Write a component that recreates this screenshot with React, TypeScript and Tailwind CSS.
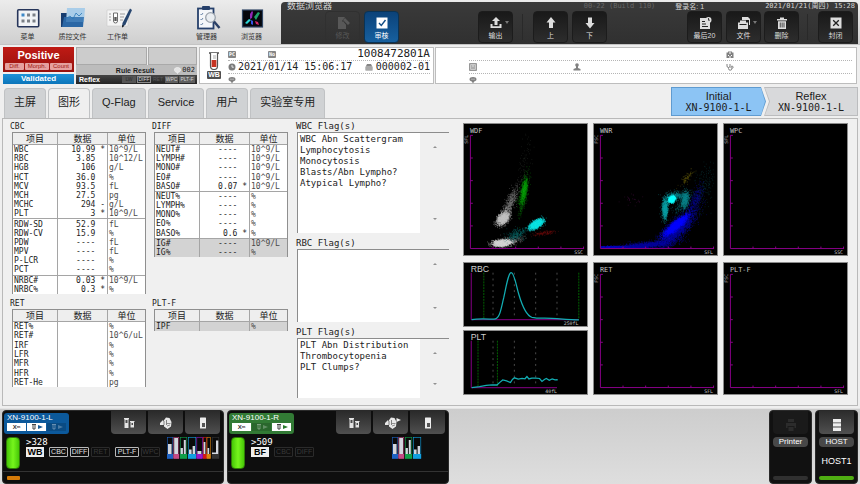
import { ReactNode } from "react";
import clsx from "clsx";

const MONO = "font-['DejaVu_Sans_Mono','Noto_Sans_CJK_SC',monospace]";
const SANS = "font-['Liberation_Sans','Noto_Sans_CJK_SC',sans-serif]";

type Row = [name: string, value: string, flag: string, unit: string];

interface Group {
  rows: Row[];
  research?: boolean;
}

const CBC: Group[] = [
  {
    rows: [
      ["WBC", "10.99", "*", "10^9/L"],
      ["RBC", "3.85", "", "10^12/L"],
      ["HGB", "106", "", "g/L"],
      ["HCT", "36.0", "", "%"],
      ["MCV", "93.5", "", "fL"],
      ["MCH", "27.5", "", "pg"],
      ["MCHC", "294", "-", "g/L"],
      ["PLT", "3", "*", "10^9/L"],
    ],
  },
  {
    rows: [
      ["RDW-SD", "52.9", "", "fL"],
      ["RDW-CV", "15.9", "", "%"],
      ["PDW", "----", "", "fL"],
      ["MPV", "----", "", "fL"],
      ["P-LCR", "----", "", "%"],
      ["PCT", "----", "", "%"],
    ],
  },
  {
    rows: [
      ["NRBC#", "0.03", "*", "10^9/L"],
      ["NRBC%", "0.3", "*", "%"],
    ],
  },
];

const DIFF: Group[] = [
  {
    rows: [
      ["NEUT#", "----", "", "10^9/L"],
      ["LYMPH#", "----", "", "10^9/L"],
      ["MONO#", "----", "", "10^9/L"],
      ["EO#", "----", "", "10^9/L"],
      ["BASO#", "0.07", "*", "10^9/L"],
    ],
  },
  {
    rows: [
      ["NEUT%", "----", "", "%"],
      ["LYMPH%", "----", "", "%"],
      ["MONO%", "----", "", "%"],
      ["EO%", "----", "", "%"],
      ["BASO%", "0.6", "*", "%"],
    ],
  },
  {
    research: true,
    rows: [
      ["IG#", "----", "", "10^9/L"],
      ["IG%", "----", "", "%"],
    ],
  },
];

const RET: Group[] = [
  {
    rows: [
      ["RET%", "", "", "%"],
      ["RET#", "", "", "10^6/uL"],
      ["IRF", "", "", "%"],
      ["LFR", "", "", "%"],
      ["MFR", "", "", "%"],
      ["HFR", "", "", "%"],
      ["RET-He", "", "", "pg"],
    ],
  },
];

const PLTF: Group[] = [{ research: true, rows: [["IPF", "", "", "%"]] }];

interface Cluster {
  x: number;
  y: number;
  long: number;
  short: number;
  angle: number;
  count: number;
  color: string;
}

const WDF_CLUSTERS: Cluster[] = [
  { x: 61, y: 40, long: 16, short: 3, angle: -83, count: 90, color: "#2c332c" },
  { x: 46, y: 82, long: 10, short: 2.2, angle: -68, count: 650, color: "#7c7c7c" },
  { x: 39.5, y: 96, long: 3.6, short: 2.4, angle: -45, count: 1300, color: "#c4c4c4" },
  { x: 48, y: 118, long: 6, short: 2, angle: -10, count: 250, color: "#777777" },
  { x: 38.5, y: 121, long: 4.6, short: 1.6, angle: -4, count: 1700, color: "#d6d6d6" },
  { x: 60.5, y: 70, long: 8.5, short: 1.8, angle: -80, count: 900, color: "#087a08" },
  { x: 61, y: 67, long: 5, short: 1.2, angle: -80, count: 300, color: "#0da00d" },
  { x: 53, y: 112, long: 5, short: 3, angle: -20, count: 330, color: "#0b6060" },
  { x: 73, y: 102, long: 3.8, short: 1.7, angle: -32, count: 1600, color: "#0fe5e5" },
  { x: 81, y: 111, long: 6, short: 1, angle: -8, count: 150, color: "#701010" },
];

const WNR_CLUSTERS: Cluster[] = [
  { x: 40, y: 76, long: 5, short: 3, angle: 0, count: 26, color: "#50104a" },
  { x: 112, y: 64, long: 14, short: 5, angle: -75, count: 190, color: "#0b4046" },
  { x: 94, y: 55, long: 5, short: 1.6, angle: -50, count: 90, color: "#6c6510" },
  { x: 102, y: 79, long: 9, short: 2.6, angle: -68, count: 450, color: "#0a0a8c" },
  { x: 24, y: 125, long: 16, short: 0.5, angle: 0, count: 900, color: "#0808c8" },
  { x: 52, y: 123, long: 14, short: 1.5, angle: -6, count: 1500, color: "#0707a0" },
  { x: 83, y: 108, long: 12, short: 4, angle: -45, count: 3600, color: "#0808a4" },
  { x: 83, y: 103, long: 7, short: 1.8, angle: -40, count: 2400, color: "#0505ff" },
  { x: 83, y: 73, long: 6, short: 2, angle: -5, count: 450, color: "#0d8088" },
  { x: 87, y: 85, long: 4, short: 2.5, angle: -40, count: 130, color: "#0a5a60" },
  { x: 92.5, y: 77, long: 4.2, short: 1.9, angle: -85, count: 650, color: "#0f858c" },
  { x: 72, y: 86, long: 5, short: 1.4, angle: -88, count: 850, color: "#0fa0a5" },
  { x: 79, y: 76.5, long: 1.8, short: 1.4, angle: -50, count: 900, color: "#12ffff" },
];

// Deterministic gaussian cloud, so that the plot does not change between renders.
function cloudPath(cluster: Cluster, seed: number) {
  let state = seed * 7919 + 17;
  const next = () => {
    state = (state * 1664525 + 1013904223) % 4294967296;
    return (state + 1) / 4294967297;
  };
  const rad = (cluster.angle * Math.PI) / 180;
  let d = "";
  for (let i = 0; i < cluster.count; i++) {
    const r = Math.sqrt(-2 * Math.log(next()));
    const t = 2 * Math.PI * next();
    const u = r * Math.cos(t) * cluster.long;
    const v = r * Math.sin(t) * cluster.short;
    const x = cluster.x + u * Math.cos(rad) - v * Math.sin(rad);
    const y = cluster.y + u * Math.sin(rad) + v * Math.cos(rad);
    if (x < 7 || x > 122 || y < 10 || y > 126) continue;
    d += `M${x.toFixed(1)} ${y.toFixed(1)}h.6`;
  }
  return d;
}

const TICKS = [0, 23, 46, 69, 92];

interface ScatterProps {
  title: string;
  xAxis: string;
  yAxis: string;
  clusters?: Cluster[];
}

function Scattergram({ title, xAxis, yAxis, clusters = [] }: ScatterProps) {
  return (
    <svg viewBox="0 0 125 133" className="h-[133px] w-full border border-[#8a8a8a] bg-black" role="img" aria-label={title}>
      {clusters.map((cluster, index) => (
        <path key={index} d={cloudPath(cluster, index + 1)} stroke={cluster.color} strokeWidth="0.6" />
      ))}
      <g stroke="#8a008a" strokeWidth="1" fill="none">
        <path d="M6.5 11.5V126.5H122" />
        {TICKS.map((t) => (
          <path key={t} d={`M6.5 ${t + 11.5}h2.5M${t + 29.5} 126.5v-2`} />
        ))}
      </g>
      <text x="6" y="9" fill="#c0c0c0" className={clsx(MONO, "text-[7px]")}>{title}</text>
      <text x="121" y="132" textAnchor="end" fill="#c0c0c0" className={clsx(MONO, "text-[5px]")}>{xAxis}</text>
      <text transform="translate(4 20) rotate(-90)" fill="#a0a0a0" className={clsx(MONO, "text-[5px]")}>{yAxis}</text>
    </svg>
  );
}

interface HistogramProps {
  title: string;
  scale: string;
  end: number;
  curve: string;
  limits: number[];
  grid: number[];
}

function Histogram({ title, scale, end, curve, limits, grid }: HistogramProps) {
  return (
    <svg viewBox="0 0 125 65" className="h-[65px] w-full border border-[#8a8a8a] bg-black" role="img" aria-label={title}>
      {grid.map((x) => (
        <path key={x} d={`M${x} 10V58`} stroke="#4c4c4c" strokeDasharray="2 4" />
      ))}
      {limits.map((x) => (
        <path key={x} d={`M${x} 10V58`} stroke="#006400" strokeDasharray="2 1" />
      ))}
      <path d={`M6.5 10V58.5H${end}`} stroke="#8a008a" fill="none" />
      <path d={curve} stroke="#12adb3" strokeWidth="1.3" fill="none" />
      <text x="6" y="9" fill="#cccccc" className={clsx(SANS, "text-[9px]")}>{title}</text>
      <text x={end} y="64" textAnchor="end" fill="#c0c0c0" className={clsx(MONO, "text-[5px]")}>{scale}</text>
    </svg>
  );
}

function ResultTable({ title, groups, height }: { title: string; groups: Group[]; height: string }) {
  return (
    <section>
      <h2 className="h-[11px] text-[8px] leading-[11px]">{title}</h2>
      <table className={clsx("ml-[2px] w-[134px] table-fixed border-separate border-spacing-0 border-x border-t border-[#8f8f8f] text-[8px] leading-[9px]", height)}>
        <colgroup>
          <col className="w-[45px]" />
          <col className="w-[50px]" />
          <col />
        </colgroup>
        <thead>
          <tr className="h-[12px] bg-[#eeeeee] text-[9px] leading-[10px]">
            {["项目", "数据", "单位"].map((head) => (
              <th key={head} className="border-b border-r border-[#a5a5a5] p-0 font-normal last:border-r-0">
                {head}
              </th>
            ))}
          </tr>
        </thead>
        {groups.map((group, index) => (
          <tbody key={index} className={group.research ? "bg-[#d3d3d3]" : "bg-white"}>
            {group.rows.map(([name, value, flag, unit], rowIndex) => {
              const line = index > 0 && rowIndex === 0 && "border-t";
              return (
                <tr key={name}>
                  <td className={clsx("border-r border-[#a5a5a5] p-0 pl-[1px]", line)}>{name}</td>
                  <td className={clsx("whitespace-pre border-r border-[#a5a5a5] p-0 pr-[2px] text-right", line)}>
                    {value && `${value} ${flag || " "}`}
                  </td>
                  <td className={clsx("border-[#a5a5a5] p-0 pl-[1px] text-[#4a4a4a]", line)}>{unit}</td>
                </tr>
              );
            })}
          </tbody>
        ))}
      </table>
    </section>
  );
}

function FlagBox({ title, flags, height }: { title: string; flags: string[]; height: string }) {
  return (
    <section>
      <h2 className="h-[11px] text-[9px] leading-[11px]">{title}</h2>
      <div className={clsx("ml-[1px] flex border-l border-t border-[#8c8c8c]", height)}>
        <ul className="flex-1 bg-white pl-[2px] pt-px text-[9px] leading-[11px]">
          {flags.map((flag) => (
            <li key={flag}>{flag}</li>
          ))}
        </ul>
        <div className="flex w-[29px] flex-col items-center justify-between py-[13px]">
          <button type="button" aria-label={`${title} up`} className="leading-none">
            <svg viewBox="0 0 4 2" className="h-[2px] w-[4px]"><path d="M0 2 2 0l2 2z" fill="#909090" /></svg>
          </button>
          <button type="button" aria-label={`${title} down`} className="leading-none">
            <svg viewBox="0 0 4 2" className="h-[2px] w-[4px]"><path d="M0 0l2 2 2-2z" fill="#909090" /></svg>
          </button>
        </div>
      </div>
    </section>
  );
}

function LauncherButton({ label, children }: { label: string; children: ReactNode }) {
  return (
    <button type="button" className="flex w-[45px] flex-col items-center text-[7px] leading-[10px] text-[#333333]">
      <svg viewBox="0 0 28 26" className="mb-[1px] h-[26px] w-[28px]">{children}</svg>
      {label}
    </button>
  );
}

interface ToolButtonProps {
  label: string;
  variant?: "normal" | "active" | "disabled";
  arrow?: boolean;
  className?: string;
  children: ReactNode;
}

function ToolButton({ label, variant = "normal", arrow, className, children }: ToolButtonProps) {
  return (
    <button
      type="button"
      disabled={variant === "disabled"}
      className={clsx(
        "relative flex h-[32px] w-[35px] shrink-0 flex-col items-center rounded-[4px] border pt-[4px] text-[7px] leading-[10px]",
        variant === "normal" && "border-[#1c1c1c] bg-linear-to-b from-[#191919] to-[#2d2d2d] text-[#dddddd]",
        variant === "active" && "border-[#0a3355] bg-linear-to-b from-[#0b4279] to-[#17609f] text-white",
        variant === "disabled" && "border-[#303030] text-[#585858]",
        className,
      )}
    >
      <svg viewBox="0 0 14 14" className="mb-[1px] size-[14px]" fill="currentColor">{children}</svg>
      {label}
      {arrow ? (
        <svg viewBox="0 0 4 3" className="absolute right-[3px] top-[9px] h-[3px] w-[4px]"><path d="M0 0h4L2 3z" fill="#777777" /></svg>
      ) : null}
    </button>
  );
}

function Divider({ className }: { className: string }) {
  return <span className={clsx("h-[26px] w-px shrink-0 bg-[#292929]", className)} />;
}

function Header() {
  return (
    <header className="flex h-[45px] border-b border-[#c4c4c4] bg-linear-to-b from-[#ececec] to-[#cfcfcf]">
      <div className="flex w-[281px] shrink-0 pl-[5px] pt-[5px]">
        <LauncherButton label="菜单">
          <rect x="3.700" y="4.700" width="21" height="17" rx="1" fill="#f1f3f6" stroke="#26355a" strokeWidth="1.6" />
          <rect x="7.500" y="8.500" width="3" height="3" fill="#3c88c8" />
          {[13, 18.5].map((x) => <rect key={x} x={x} y="8.500" width="3" height="3" fill="#7b8087" />)}
          {[7.5, 13, 18.5].map((x) => <rect key={x} x={x} y="14.500" width="3" height="3" fill="#7b8087" />)}
        </LauncherButton>
        <LauncherButton label="质控文件">
          <path d="M2 8h7l2-2h13v16H2z" fill="#173d70" />
          <path d="M8 3h18l-1 14H7z" fill="#a9cde9" />
          <path d="M5 12h20l-1 10H3z" fill="#2f6fae" opacity=".85" />
          <path d="M8 13l3-2 3 3 3-6 3 3 3-3" fill="none" stroke="#2b78b8" strokeWidth=".8" />
        </LauncherButton>
        <LauncherButton label="工作单">
          <path d="M3 5h21v16H3z" fill="#f4f4f4" stroke="#c2c2c2" strokeWidth=".5" />
          <path d="M5 9h2m-2 3h2m-2 3h2m9-6h5m-5 3h4m-4 3h3" stroke="#9c9c9c" strokeWidth="1" />
          <path d="M9.500 8h4v8a2 2 0 0 1-4 0z" fill="#ffffff" stroke="#5e5e5e" strokeWidth=".9" />
          <path d="M10.300 12h2.400v4h-2.400z" fill="#565656" />
          <path d="M28 5l-2-1.500L18.500 18l-.5 4.500 3.500-3z" fill="#28466f" />
          <path d="M18 22.500l.4-2.500 1.800 1z" fill="#111111" />
        </LauncherButton>
        <span className="w-[44px]" />
        <LauncherButton label="管理器">
          <rect x="5" y="3.500" width="15.500" height="20" fill="#f4f6f9" stroke="#26406b" strokeWidth="1.800" />
          <rect x="9" y="1" width="8" height="4" rx="1" fill="#26406b" />
          <path d="M7.500 9l1 1 1.500-2m-2.500 6 1 1 1.500-2m-2.500 6 1 1 1.500-2" fill="none" stroke="#5e7ba0" strokeWidth=".9" />
          <circle cx="17.500" cy="12.500" r="4.800" fill="#e9edf1" stroke="#9aa2ab" strokeWidth="1.300" />
          <path d="M21 16.500l5.500 6.500" stroke="#2b4066" strokeWidth="2.400" />
        </LauncherButton>
        <LauncherButton label="浏览器">
          <rect x="4.500" y="5" width="20" height="17" fill="#05070d" stroke="#314766" strokeWidth="1.200" />
          <path d="M12 9l2-3 1 1-1 6-2 1z" fill="#9127b7" />
          <path d="M16 12l4-5 2 1-4 7z" fill="#1fa56a" />
          <path d="M7 18l4-4 2 1-4 4z" fill="#2dd6d6" />
          <path d="M17 16l3 1 1 3-3-1z" fill="#d22a6a" />
          <path d="M13 15l2 1v4l-2-1z" fill="#3654e6" />
        </LauncherButton>
      </div>
      <div className="mr-[2px] mt-[2px] flex-1 rounded-t-[4px] bg-linear-to-b from-[#3a3a3a] to-[#303030]">
        <div className="flex h-[9px] items-center pl-[6px] pr-[3px] text-[7px] leading-[9px] text-[#d6d6d6]">
          <h1 className="flex-1 text-[9px]">数据浏览器</h1>
          <span className={clsx(MONO, "mr-[20px] text-[#666666]")}>00-22 (Build 110)</span>
          <span className="mr-[61px]">登录名: 1</span>
          <time className={MONO}>2021/01/21(周四) 15:28</time>
        </div>
        <nav className="flex items-center pr-[5px]">
          <ToolButton label="修改" variant="disabled" className="ml-[44px]">
            <path d="M2 1h7l-3 4 4 4v4H2z" />
            <path d="M9 2l5 5-2 2-5-5zM7 5l3 4H7z" />
          </ToolButton>
          <ToolButton label="审核" variant="active" className="ml-[4px]">
            <rect x="1.500" y="1.500" width="11" height="11" />
            <path d="M4 7l2.300 2.500L10.500 4" fill="none" stroke="#124d85" strokeWidth="1.400" />
          </ToolButton>
          <ToolButton label="输出" arrow className="ml-[79px]">
            <path d="M7 1l4 4H8.500v4h-3V5H3z" />
            <path d="M1.500 8v4h11V8h-2v2.200h-7V8z" />
          </ToolButton>
          <Divider className="ml-[9px]" />
          <ToolButton label="上" className="ml-[10px]">
            <path d="M7 1l4.500 5.500H9V12H5V6.500H2.500z" />
          </ToolButton>
          <ToolButton label="下" className="ml-[4px]">
            <path d="M7 12.500L2.500 7H5V1.500h4V7h2.500z" />
          </ToolButton>
          <span className="flex-1" />
          <ToolButton label="最后20">
            <path fillRule="evenodd" d="M2 2h6v4h4v7H2zM4 5v1h3V5zm0 2.500v1h4v-1zM4 10v1h6v-1z" />
            <path fillRule="evenodd" d="M10.500 1a3 3 0 1 1 0 6 3 3 0 0 1 0-6zm-.5 1v2.500h2V3.700h-1.200V2z" />
          </ToolButton>
          <ToolButton label="文件" arrow className="ml-[4px]">
            <path d="M5 1h6l2 2v6h-1V4H5z" />
            <path d="M3 4.500h6v2h2V13H1V6.500h2z" />
            <path d="M2.500 8.500h7" stroke="#222222" />
          </ToolButton>
          <ToolButton label="删除" className="ml-[3px]">
            <path fillRule="evenodd" d="M5 1.500h4V3h3v1.500H2V3h3zM3 5.200h8V13H3zM4.800 6.500v5h.8v-5zm1.900 0v5h.8v-5zm1.900 0v5h.8v-5z" />
          </ToolButton>
          <Divider className="ml-[8px]" />
          <ToolButton label="封闭" className="ml-[10px]">
            <rect x="1.500" y="1.500" width="11" height="11" />
            <path d="M4.200 4.200l5.600 5.600m0-5.600L4.200 9.800" stroke="#202020" strokeWidth="1.300" />
          </ToolButton>
        </nav>
      </div>
    </header>
  );
}

function Balloon() {
  return (
    <svg viewBox="0 0 8 8" className="size-[8px]"><path d="M4 1c2 0 3.500.8 3.500 2.200S6.300 5.300 5.200 5.400L4 7.500 2.800 5.400C1.700 5.300.5 4.600.5 3.200S2 1 4 1z" fill="#808080" /><path d="M2 3.200h4" stroke="#c8c8c8" strokeWidth=".7" /></svg>
  );
}

function KeyBadge({ children }: { children: ReactNode }) {
  return <span className="block rounded-[1px] bg-[#858585] px-[1px] text-[5px] font-bold leading-[7px] text-white">{children}</span>;
}

function SampleBar() {
  return (
    <div className="flex h-[40px] items-stretch px-[3px] pb-[1px] pt-[2px]">
      <div className="flex w-[71px] flex-col gap-[2px] text-center font-bold text-white">
        <div className="h-[25px] bg-linear-to-b from-[#c01a14] to-[#96120e]">
          <p className="text-[11px] leading-[16px]">Positive</p>
          <ul className="flex gap-[1px] px-[2px] text-[6px] font-normal leading-[7px] text-[#a01510]">
            <li className="w-[19px] rounded-[1px] bg-[#e5a19f]">Diff.</li>
            <li className="flex-1 rounded-[1px] bg-[#e5a19f]">Morph.</li>
            <li className="w-[22px] rounded-[1px] bg-[#e5a19f]">Count</li>
          </ul>
        </div>
        <p className="flex-1 bg-linear-to-b from-[#1c92d8] to-[#0c75ba] text-[8px] leading-[10px]">Validated</p>
      </div>
      <div className="ml-[2px] flex w-[121px] flex-col bg-[#bcbcbc]">
        <div className="flex h-[18px] gap-[1px] bg-[#efefef]">
          <span className="w-[71px] border border-[#a9a9a9] bg-[#cccccc]" />
          <span className="flex-1 border border-[#a9a9a9] bg-[#cccccc]" />
        </div>
        <div className="flex h-[10px] items-center justify-end pr-[2px] text-[7px] leading-[9px]">
          <b className="mr-[20px]">Rule Result</b>
          <svg viewBox="0 0 8 8" className="mr-[1px] size-[7px]"><path d="M4 .5c2 0 3.500 1 3.500 2.700S6 6 5 6L4 7.500 3 6C2 6 .5 5 .5 3.200S2 .5 4 .5z" fill="#e4e4e4" stroke="#ffffff" strokeWidth=".6" /></svg>
          <span className={MONO}>002</span>
        </div>
        <div className="flex h-[9px] items-center gap-[1px] bg-linear-to-b from-[#454545] to-[#242424] px-[2px] text-[5px] leading-[7px] text-[#d5d5d5]">
          <b className="flex-1 pl-px text-[7px] text-white">Reflex</b>
          <span className="w-[14px] bg-[#555555] text-center text-[#2c2c2c]">LW</span>
          <span className="w-[14px] border border-[#8c8c8c] text-center leading-[5px]">DIFF</span>
          <span className="w-[12px] text-center text-[#5a5a5a]">RET</span>
          <span className="w-[13px] bg-[#606060] text-center">WPC</span>
          <span className="w-[16px] bg-[#606060] text-center">PLT-F</span>
        </div>
      </div>
      <div className="ml-[2px] flex w-[235px] border border-[#bdbdbd] bg-white pr-[3px]">
        <div className="flex w-[28px] flex-col items-center pt-[4px]">
          <svg viewBox="0 0 12 18" className="h-[18px] w-[12px]">
            <path d="M1 1h10" stroke="#555555" strokeWidth="1.600" />
            <path d="M2.500 1v13a3.500 3.500 0 0 0 7 0V1" fill="#ffffff" stroke="#555555" strokeWidth="1.200" />
            <path d="M3.600 8h4.800v7H3.600z" fill="#c63322" />
            <path d="M5 4h3M5 6h3" stroke="#888888" strokeWidth=".7" />
          </svg>
          <span className="mt-px rounded-[1px] bg-[#4e4e4e] px-px text-[7px] font-bold leading-[8px] text-white">WB</span>
        </div>
        <div className={clsx(MONO, "flex-1 text-[10px] text-[#222222]")}>
          <div className="flex h-[13px] items-center border-b border-dotted border-[#b5b5b5] text-[11px]">
            <KeyBadge>PC</KeyBadge>
            <span className="ml-[32px]"><KeyBadge>No</KeyBadge></span>
            <span className="flex-1 text-right leading-[12px]">1008472801A</span>
          </div>
          <div className="flex h-[13px] items-center border-b border-dotted border-[#b5b5b5] leading-[12px]">
            <svg viewBox="0 0 8 8" className="size-[8px]"><circle cx="4" cy="4" r="3.500" fill="#7b7b7b" /><path d="M4 2v2.200h1.800" fill="none" stroke="#fff" strokeWidth=".8" /></svg>
            <time className="ml-[2px]">2021/01/14 15:06:17</time>
            <svg viewBox="0 0 8 8" className="ml-auto mr-[3px] size-[8px]"><path d="M2 1h4l1.500 3v3.500h-7V4z" fill="#858585" /><path d="M1 4h6M1 6h6" stroke="#ffffff" strokeWidth=".6" /></svg>
            <span>000002-01</span>
          </div>
          <div className="flex h-[11px] items-center"><Balloon /></div>
        </div>
      </div>
      <div className="ml-[1px] flex-1 border border-[#bdbdbd] bg-white pl-[33px] pr-[4px]">
        <div className="grid h-[13px] grid-cols-[104fr_153fr_126fr] items-center border-b border-dotted border-[#b5b5b5]">
          <svg viewBox="0 0 8 8" className="col-start-3 size-[8px]"><path fillRule="evenodd" d="M2 1.500h4V2.500h1.500V8h-7V2.500H2zM3.500 2v2h1V2zM2 5v1h1V5zm3 0v1h1V5zM3.500 6v2h1V6z" fill="#808080" /></svg>
        </div>
        <div className="grid h-[13px] grid-cols-[104fr_153fr_126fr] items-center border-b border-dotted border-[#b5b5b5]">
          <svg viewBox="0 0 8 8" className="size-[8px]"><rect x=".7" y=".7" width="6.600" height="6.600" fill="#dddddd" stroke="#808080" /><path d="M2 3h1.500M4.500 3H6M2 5h4" stroke="#808080" /></svg>
          <svg viewBox="0 0 8 8" className="size-[8px]"><circle cx="4" cy="2" r="1.800" fill="#808080" /><path d="M3 3h2v2l2.500 1v1.500h-7V6L3 5z" fill="#808080" /></svg>
          <svg viewBox="0 0 8 8" className="size-[8px]" fill="none" stroke="#808080"><path d="M1 1v2a1.500 1.500 0 0 0 3 0V1M2.500 4.500v1a1.700 1.700 0 0 0 3.400 0" /><circle cx="6" cy="4.200" r="1.100" /></svg>
        </div>
        <div className="flex h-[11px] items-center"><Balloon /></div>
      </div>
    </div>
  );
}

const TABS = ["主屏", "图形", "Q-Flag", "Service", "用户", "实验室专用"];

function TabBar() {
  return (
    <div className="flex h-[33px] items-end pl-[4px] pr-[2px]">
      <div role="tablist" className="flex gap-[2px] text-[11px] text-[#222222]">
        {TABS.map((tab) => (
          <button
            key={tab}
            type="button"
            role="tab"
            aria-selected={tab === "图形"}
            className={clsx(
              "h-[30px] rounded-t-[4px] border border-b-0 border-[#c0c2c4] px-[9px] pb-[2px]",
              tab === "图形" ? "bg-[#efefef]" : "bg-[#d0d2d4]",
            )}
          >
            {tab}
          </button>
        ))}
      </div>
      <div className="mb-[2px] ml-auto flex text-[11px] leading-[12px]">
        <button type="button" className="z-10 -mr-[2px] w-[95px] bg-[#5f9bd0] p-px [clip-path:polygon(0_0,90px_0,100%_50%,90px_100%,0_100%)]">
          <span className="block h-[27px] bg-[#8cc4f4] pt-[2px] [clip-path:polygon(0_0,89px_0,100%_50%,89px_100%,0_100%)]">
            <span className="block">Initial</span>
            <span className={clsx(MONO, "block text-[10px]")}>XN-9100-1-L</span>
          </span>
        </button>
        <button type="button" className="w-[94px] bg-[#bbbcbe] p-px [clip-path:polygon(0_0,100%_0,100%_100%,0_100%,5px_50%)]">
          <span className="block h-[27px] bg-[#d8d9db] pt-[2px] [clip-path:polygon(0_0,100%_0,100%_100%,0_100%,5px_50%)]">
            <span className="block">Reflex</span>
            <span className={clsx(MONO, "block text-[10px]")}>XN-9100-1-L</span>
          </span>
        </button>
      </div>
    </div>
  );
}

const RBC_CURVE =
  "M7 58.500C15 57 25 58 30 58C36 58 37 48 40 36C43 22 45 10 47.700 10C51 10 53 24 55.500 32C59 44 63 54 69 56C75 57.500 85 56.500 95 57.500S110 58.500 117.700 58.700";
const PLT_CURVE =
  "M7 58.300L15 57.500 22 56 28 55.500 33 55.700 36 53 39 50.500 43 51.500 47 53.200 49 50 51 48.300 55 49.700 59 49 62 49.300 64 47 66 49.500 69 48.700 73 48.500 77 49 79.500 52 82 50 84 49 87 50.800 90 49.500 93 50.500 95.700 50.300";

interface Gauge {
  color: string;
  x: number;
  w: number;
  bars: [x: number, w: number, top: number][];
}

const GAUGES: Gauge[] = [
  { color: "#1d62c4", x: 0, w: 5.5, bars: [[1, 3.6, 7]] },
  { color: "#c44a85", x: 6.5, w: 5, bars: [[7.2, 3.8, 1]] },
  { color: "#10a04a", x: 13, w: 6.5, bars: [[13.6, 2.3, 11], [16.8, 2, 3]] },
  { color: "#12a0e0", x: 21, w: 7.5, bars: [[22, 2.6, 12.5], [25.6, 2.4, 9]] },
  { color: "#9a18c8", x: 29.5, w: 5.5, bars: [[30.4, 4, 14]] },
  { color: "#d01818", x: 36, w: 3, bars: [[36.6, 1.8, 5]] },
  { color: "#d88210", x: 39.7, w: 3.3, bars: [[40.5, 1.7, 11]] },
  { color: "#333333", x: 45, w: 6.5, bars: [[45, 4, 15.5], [49, 2.3, 3.5]] },
];

function ReagentGauges({ gauges }: { gauges: Gauge[] }) {
  return (
    <svg viewBox="0 0 53 22" className="h-[22px] w-[53px]" role="img" aria-label="Reagents">
      {gauges.map((gauge) => (
        <g key={gauge.color}>
          <rect x={gauge.x + 0.3} y=".3" width={gauge.w} height="21" fill="#0a0a0a" stroke={gauge.color} strokeWidth=".6" />
          {gauge.bars.map(([x, w, top]) => (
            <rect key={x} x={x} y={top} width={w} height={17 - top} fill="#d2d6de" />
          ))}
          <rect x={gauge.x} y="17" width={gauge.w + 0.6} height="4.600" fill={gauge.color} />
        </g>
      ))}
    </svg>
  );
}

interface AnalyzerProps {
  name: string;
  count: string;
  mode: string;
  tone: "blue" | "green";
  tags: { label: string; on: boolean; gap?: boolean }[];
  gauges: Gauge[];
  alert?: boolean;
}

function Analyzer({ name, count, mode, tone, tags, gauges, alert }: AnalyzerProps) {
  const blue = tone === "blue";
  const button = "flex h-[23px] w-[35px] items-center justify-center rounded-b-[4px] bg-linear-to-b from-[#2a2a2a] to-[#505050]";
  return (
    <section className="flex h-[74px] w-[222px] shrink-0 flex-col overflow-hidden rounded-[4px] border border-[#2a2a2a] bg-[#0e0e0e] text-white">
      <div className="flex h-[24px] items-start pl-[1px] pr-[3px]">
        <div className={clsx("mr-auto mt-[2px] h-[21px] w-[65px] rounded-[3px] pl-[3px]", blue ? "bg-[#0c599b]" : "bg-[#327a35]")}>
          <h3 className="text-[8px] leading-[10px]">{name}</h3>
          <div className="flex gap-[1px]">
            <span className="flex h-[8px] w-[19px] items-center justify-center bg-white text-[6px] font-bold leading-[8px] text-[#333333]">
              X<span className="text-[4px]">m</span>
            </span>
            {[0, 1].map((slot) => {
              const lit = blue ? slot === 0 : slot === 1;
              return (
                <svg key={slot} viewBox="0 0 19 8" className={clsx("h-[8px] w-[19px]", lit ? "bg-white" : "bg-black/15")}>
                  <path d="M5 1.500h4M6 1.500v4.500h2V1.500" fill="none" stroke={lit ? "#444444" : "#ffffff55"} strokeWidth="1" />
                  <path d="M11 2l5 2-5 2z" fill={lit ? (blue ? "#1a5a94" : "#287a2c") : "#ffffff44"} />
                </svg>
              );
            })}
          </div>
        </div>
        <div className="flex gap-[2px]">
          <button type="button" aria-label={`${name} sampler`} className={button}>
            <svg viewBox="0 0 12 12" className="size-[12px]">
              <path d="M1 1h5v1.200H5.500V11h-4V2.200H1z" fill="#e4e4e4" />
              <path d="M7 4h4.500v1H11v5.500H7.500V5H7z" fill="#e4e4e4" />
              <path d="M2.500 3h2v3h-2zM8.500 6h1.500v2H8.500z" fill="#4c4c4c" />
            </svg>
          </button>
          <button type="button" aria-label={`${name} analyzer`} className={button}>
            <svg viewBox="0 0 20 14" className="h-[14px] w-[20px]">
              <path d="M4 7l3-3v1.500l3-4 3.500.5 2 4-.5 4.500-3.500 2.500-3.500-2.500V9H4z" fill="#e8e8e8" />
              <path d="M8 5v4m2.500-5v5" stroke="#666666" strokeWidth=".8" />
              <path d="M11 7.500h3.500M11 10l3-1" stroke="#777777" strokeWidth=".8" />
              {blue ? null : <path d="M15.500 2l4.500 2-4.500 2z" fill="#f2f2f2" />}
            </svg>
          </button>
          <button type="button" aria-label={`${name} reagent`} className={button}>
            <svg viewBox="0 0 8 12" className="h-[12px] w-[8px]">
              <rect x="1" y=".5" width="6" height="11" rx=".5" fill="#ededed" />
              <rect x="3" y="6" width="3" height="4" fill="#555555" />
            </svg>
          </button>
        </div>
      </div>
      <div className="flex h-[36px] items-start pl-[3px] pr-[3px] pt-[2px]">
        <span className="h-[32px] w-[14px] rounded-[4px] border border-[#2f7d05] bg-linear-to-r from-[#46c806] via-[#76f51c] to-[#46c806]" />
        <div className="ml-[6px] flex-1">
          <p className={clsx(MONO, "text-[9px] leading-[10px]")}>&gt;{count}</p>
          <ul className="flex items-center gap-[2px] text-[7px] leading-[8px]">
            <li className="mr-[3px] w-[18px] bg-[#eeeeee] py-px text-center text-[9px] font-bold text-black">{mode}</li>
            {tags.map((tag) => (
              <li
                key={tag.label}
                className={clsx(
                  "rounded-[1px] border text-center",
                  tag.label.length > 4 ? "w-[24px]" : "w-[19px]",
                  tag.on ? "border-[#b8b8b8] text-[#e0e0e0]" : "border-[#2b2b2b] text-[#3a3a3a]",
                  tag.gap && "ml-[3px]",
                )}
              >
                {tag.label}
              </li>
            ))}
          </ul>
        </div>
        <ReagentGauges gauges={gauges} />
      </div>
      <div className="flex flex-1 items-center border-t border-[#333333] pl-[4px]">
        {alert ? <span className="h-[4px] w-[13px] rounded-[1px] bg-[#d47a08]" /> : null}
      </div>
    </section>
  );
}

function Peripheral({ name, detail, on }: { name: string; detail?: string; on?: boolean }) {
  return (
    <section className="flex h-[74px] w-[43px] shrink-0 flex-col items-center rounded-[4px] border border-[#2a2a2a] bg-[#111111] pb-[3px] text-white">
      <button
        type="button"
        aria-label={name}
        className={clsx("flex h-[23px] w-[35px] items-center justify-center rounded-b-[4px]", on ? "bg-linear-to-b from-[#2c2c2c] to-[#505050]" : "bg-[#1a1a1a]")}
      >
        <svg viewBox="0 0 12 12" className="mt-[5px] size-[12px]">
          {on ? (
            <path d="M2 0h8v3.400H2zM2 4.200h8v3.400H2zM2 8.400h8V12H2z" fill="#eeeeee" />
          ) : (
            <path d="M3 0h6v3h-6zM1 4h10v5H9.500V7h-7v2H1zM3.500 8h5v4h-5z" fill="#2c2c2c" />
          )}
        </svg>
      </button>
      <h3 className="mt-[3px] w-[35px] rounded-[4px] bg-[#484848] text-center text-[8px] leading-[10px]">{name}</h3>
      <p className="mt-[8px] flex-1 text-[9px] leading-[12px]">{detail}</p>
      <span className={clsx("h-[4px] w-[35px] rounded-[2px]", on ? "bg-[#4fae12]" : "bg-[#303030]")} />
    </section>
  );
}

export default function App() {
  return (
    <div className={clsx(SANS, "flex min-h-screen flex-col bg-[#efefef] text-[#1c1c1c]")}>
      <Header />
      <SampleBar />
      <TabBar />
      <main className={clsx(MONO, "mx-[2px] flex items-start border border-[#b9b9b9] bg-[#f0f0f0] pb-[7px] pl-[7px] pr-[9px] pt-[2px]")}>
        <div className="grid grid-cols-[136px_136px] items-start gap-x-[6px] gap-y-[4px]">
          <ResultTable title="CBC" groups={CBC} height="h-[162px]" />
          <ResultTable title="DIFF" groups={DIFF} height="h-[125px]" />
          <ResultTable title="RET" groups={RET} height="h-[78px]" />
          <ResultTable title="PLT-F" groups={PLTF} height="h-[21px]" />
        </div>
        <div className="ml-[8px] flex w-[153px] flex-col gap-[5px]">
          <FlagBox
            title="WBC Flag(s)"
            height="h-[101px]"
            flags={["WBC Abn Scattergram", "Lymphocytosis", "Monocytosis", "Blasts/Abn Lympho?", "Atypical Lympho?"]}
          />
          <FlagBox title="RBC Flag(s)" height="h-[73px]" flags={[]} />
          <FlagBox title="PLT Flag(s)" height="h-[60px]" flags={["PLT Abn Distribution", "Thrombocytopenia", "PLT Clumps?"]} />
        </div>
        <div className="ml-[14px] mt-[2px] grid flex-1 grid-cols-3 gap-x-[5px] gap-y-[6px]">
          <Scattergram title="WDF" xAxis="SSC" yAxis="SFL" clusters={WDF_CLUSTERS} />
          <Scattergram title="WNR" xAxis="SFL" yAxis="FSC" clusters={WNR_CLUSTERS} />
          <Scattergram title="WPC" xAxis="SSC" yAxis="SFL" />
          <div className="flex flex-col justify-between">
            <Histogram title="RBC" scale="250fL" end={117} curve={RBC_CURVE} limits={[19.5, 117.5]} grid={[29, 51, 73, 95]} />
            <Histogram title="PLT" scale="40fL" end={95} curve={PLT_CURVE} limits={[13.5, 33.5]} grid={[29, 51, 73]} />
          </div>
          <Scattergram title="RET" xAxis="SFL" yAxis="FSC" />
          <Scattergram title="PLT-F" xAxis="SFL" yAxis="FSC" />
        </div>
      </main>
      <footer className="mt-[2px] flex flex-1 items-start gap-[3px] border-t border-[#e4e4e4] bg-linear-to-b from-[#cdcdcd] to-[#dedede] px-[2px] pt-[1px]">
        <Analyzer
          name="XN-9100-1-L"
          count="328"
          mode="WB"
          tone="blue"
          alert
          gauges={GAUGES}
          tags={[
            { label: "CBC", on: true },
            { label: "DIFF", on: true },
            { label: "RET", on: false },
            { label: "PLT-F", on: true, gap: true },
            { label: "WPC", on: false },
          ]}
        />
        <Analyzer
          name="XN-9100-1-R"
          count="509"
          mode="BF"
          tone="green"
          gauges={GAUGES.slice(0, 4)}
          tags={[
            { label: "CBC", on: false },
            { label: "DIFF", on: false },
          ]}
        />
        <span className="flex-1" />
        <Peripheral name="Printer" />
        <Peripheral name="HOST" detail="HOST1" on />
      </footer>
    </div>
  );
}
